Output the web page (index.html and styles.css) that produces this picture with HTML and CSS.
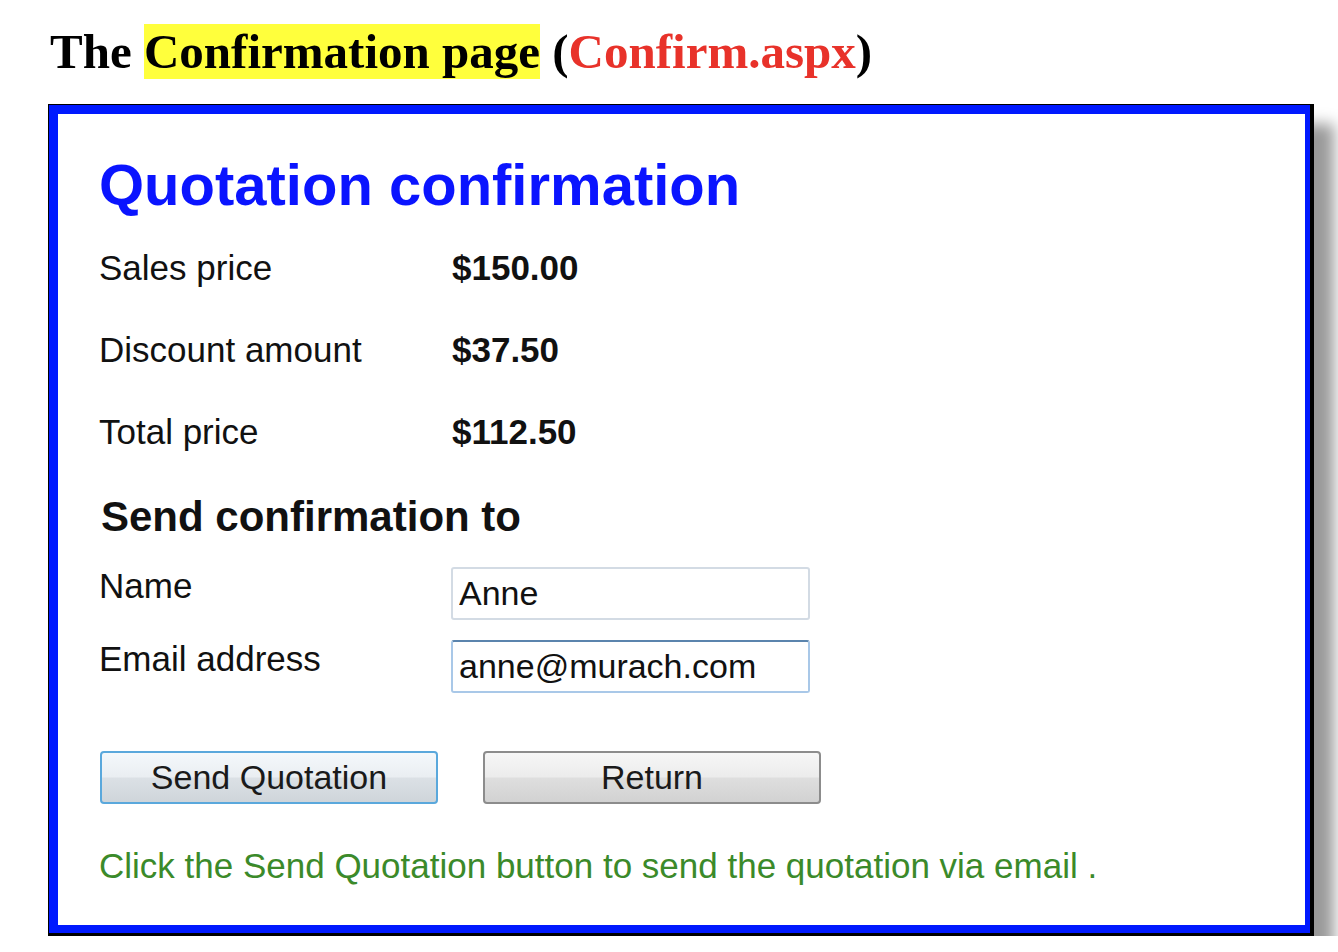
FILE: index.html
```html
<!DOCTYPE html>
<html lang="en">
<head>
    <meta charset="UTF-8">
    <title>The Confirmation page</title>
    <link rel="stylesheet" href="styles.css">
</head>
<body>
    <h1 class="page-title">The <span class="hl">Confirmation page</span> (<span class="file">Confirm.aspx</span>)</h1>

    <div class="frame">
        <div class="panel">
            <h2 class="quote-title">Quotation confirmation</h2>

            <div class="totals">
                <div class="label">Sales price</div>
                <div class="value">$150.00</div>
                <div class="label">Discount amount</div>
                <div class="value">$37.50</div>
                <div class="label">Total price</div>
                <div class="value">$112.50</div>
            </div>

            <h3 class="send-title">Send confirmation to</h3>

            <div class="contact">
                <label class="label" for="name">Name</label>
                <input class="field" id="name" type="text" value="Anne">
                <label class="label" for="email">Email address</label>
                <input class="field focused" id="email" type="text" value="anne@murach.com">
            </div>

            <div class="buttons">
                <button class="btn default">Send Quotation</button>
                <button class="btn">Return</button>
            </div>

            <p class="message">Click the Send Quotation button to send the quotation via email .</p>
        </div>
    </div>
</body>
</html>
```

FILE: styles.css
```css
* {
    box-sizing: border-box;
}

body {
    margin: 0;
    background: #fff;
    font-family: 'Liberation Sans', Arial, sans-serif;
    color: #111;
    overflow: hidden;
}

.page-title {
    margin: 0;
    padding: 24px 0 0 50px;
    height: 104px;
    font-family: 'Liberation Serif', 'Times New Roman', serif;
    font-size: 49px;
    font-weight: bold;
    line-height: 56px;
    color: #000;
}

.page-title .hl {
    background: #ffff3c;
}

.page-title .file {
    color: #e8322a;
}

.frame {
    width: 1266px;
    margin-left: 48px;
    border: 1px solid #000;
    border-right-width: 4px;
    border-bottom-width: 3px;
    box-shadow: 20px 20px 14px rgba(0, 0, 0, 0.4);
}

.panel {
    border: 9px solid #0019ff;
    border-right-width: 5px;
    border-bottom-width: 8px;
    background: #fff;
    padding: 42px 40px 42px 41px;
}

.quote-title {
    margin: 0;
    font-size: 58px;
    line-height: 58px;
    font-weight: bold;
    color: #0a14ff;
}

.totals {
    display: grid;
    grid-template-columns: 353px auto;
    row-gap: 47px;
    margin-top: 36px;
    font-size: 35px;
    line-height: 35px;
}

.label {
    font-size: 35px;
    line-height: 35px;
    color: #111;
}

.value {
    font-weight: bold;
}

.send-title {
    margin: 47px 0 0 2px;
    font-size: 42px;
    line-height: 42px;
    font-weight: bold;
}

.contact {
    display: grid;
    grid-template-columns: 352px 359px;
    row-gap: 20px;
    align-items: start;
    margin-top: 29px;
}

.contact .label {
    padding-top: 1px;
}

.field {
    width: 359px;
    height: 53px;
    padding: 0 6px;
    border: 2px solid #d3dbe4;
    border-radius: 3px;
    font-family: 'Liberation Sans', Arial, sans-serif;
    font-size: 34px;
    color: #111;
    background: #fff;
    outline: none;
}

.field.focused {
    border-color: #a9c8e8;
    border-top-color: #5b84ad;
}

.buttons {
    display: flex;
    gap: 45px;
    margin: 58px 0 0 1px;
}

.btn {
    width: 338px;
    height: 53px;
    border: 2px solid #8c8c8c;
    border-radius: 4px;
    background: linear-gradient(#f6f6f6 0%, #ececec 48%, #dedede 52%, #d2d2d2 100%);
    font-family: 'Liberation Sans', Arial, sans-serif;
    font-size: 34px;
    color: #1a1a1a;
    padding: 0;
}

.btn.default {
    border-color: #5aa8dc;
    background: linear-gradient(#f4f8fb 0%, #eaeef2 48%, #dbe0e5 52%, #cfd5da 100%);
}

.message {
    margin: 44px 0 0;
    font-size: 35px;
    line-height: 35px;
    color: #3b8a2a;
}
```
